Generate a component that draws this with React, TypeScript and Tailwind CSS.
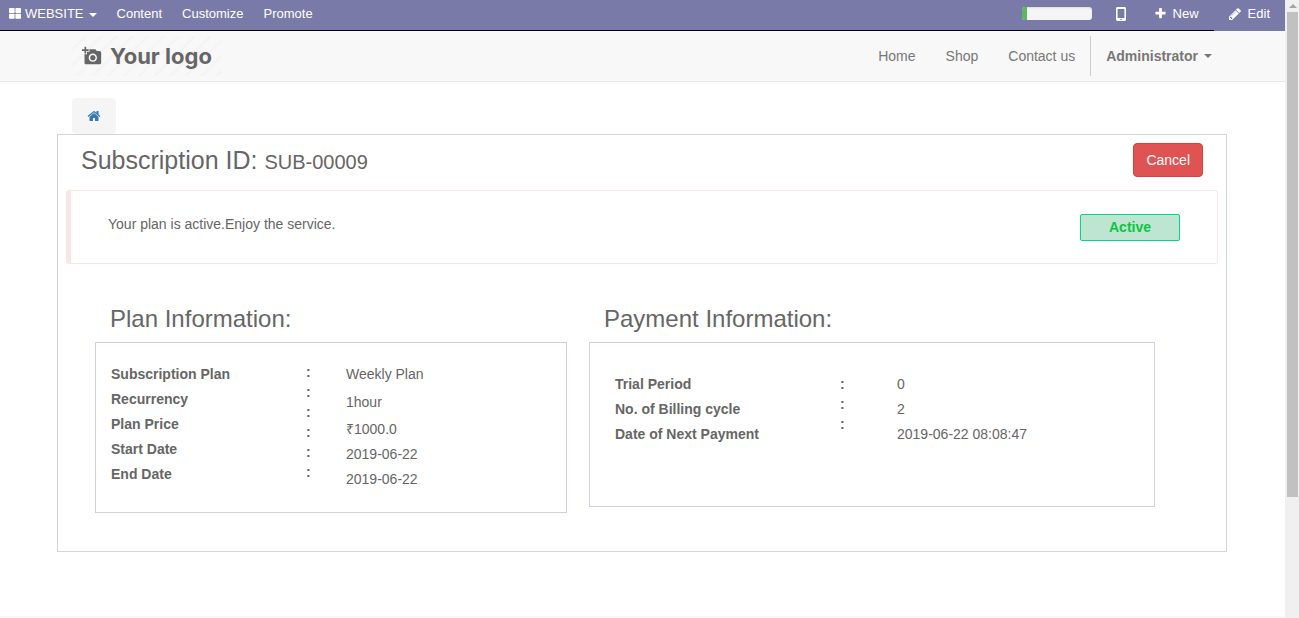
import React from "react";
import { MdAddAPhoto } from "react-icons/md";

type IconProps = { className: string };

const Caret = ({ className }: IconProps) => (
  <svg viewBox="0 0 8 4" className={className} fill="currentColor" aria-hidden="true">
    <path d="M0 0h8L4 4z" />
  </svg>
);

const TilesIcon = ({ className }: IconProps) => (
  <svg viewBox="0 0 12 11" className={className} fill="currentColor" aria-hidden="true">
    <rect x="0" y="0" width="5.6" height="5" rx="0.7" />
    <rect x="6.4" y="0" width="5.6" height="5" rx="0.7" />
    <rect x="0" y="5.8" width="5.6" height="5" rx="0.7" />
    <rect x="6.4" y="5.8" width="5.6" height="5" rx="0.7" />
  </svg>
);

const PhoneIcon = ({ className }: IconProps) => (
  <svg viewBox="0 0 10 14" className={className} fill="currentColor" aria-hidden="true">
    <path
      fillRule="evenodd"
      d="M1.4 0h7.2A1.4 1.4 0 0 1 10 1.4v11.2A1.4 1.4 0 0 1 8.6 14H1.4A1.4 1.4 0 0 1 0 12.6V1.4A1.4 1.4 0 0 1 1.4 0zM1.6 2v9h6.8V2zM5 11.7a.8.8 0 1 0 0 1.6.8.8 0 0 0 0-1.6z"
    />
  </svg>
);

const PlusIcon = ({ className }: IconProps) => (
  <svg viewBox="0 0 1792 1792" className={className} fill="currentColor" aria-hidden="true">
    <path d="M1600 736v192q0 40-28 68t-68 28h-416v416q0 40-28 68t-68 28h-192q-40 0-68-28t-28-68v-416h-416q-40 0-68-28t-28-68v-192q0-40 28-68t68-28h416v-416q0-40 28-68t68-28h192q40 0 68 28t28 68v416h416q40 0 68 28t28 68z" />
  </svg>
);

const PencilIcon = ({ className }: IconProps) => (
  <svg viewBox="0 0 1792 1792" className={className} fill="currentColor" aria-hidden="true">
    <path d="M491 1536l91-91-235-235-91 91v107h128v128h107zm523-928q0-22-22-22-10 0-17 7l-542 542q-7 7-7 17 0 22 22 22 10 0 17-7l542-542q7-7 7-17zm-54-192l416 416-832 832h-416v-416zm683 96q0 53-37 90l-166 166-416-416 166-165q36-38 90-38 53 0 91 38l235 234q37 39 37 91z" />
  </svg>
);

const HomeIcon = ({ className }: IconProps) => (
  <svg viewBox="0 0 1792 1792" className={className} fill="currentColor" aria-hidden="true">
    <path d="M1472 992v480q0 26-19 45t-45 19h-384v-384h-256v384h-384q-26 0-45-19t-19-45v-480q0-1 .5-3t.5-3l575-474 575 474q1 2 1 6zm223-69l-62 74q-8 9-21 11h-3q-13 0-21-7l-692-577-692 577q-12 8-24 7-13-2-21-11l-62-74q-8-10-7-23.5t11-21.5l719-599q32-26 76-26t76 26l244 204v-195q0-14 9-23t23-9h192q14 0 23 9t9 23v408l219 182q10 8 11 21.5t-7 23.5z" />
  </svg>
);

function TopBar() {
  return (
    <header className="flex h-[31px] bg-[#7a7aa8] text-[13px] leading-[27px] text-white">
      <div className="flex flex-1 justify-between border-b border-black">
        <nav className="flex items-start">
          <button className="flex items-center pr-[10px] pl-[9px]">
            <TilesIcon className="mr-1 h-[11px] w-3" />
            WEBSITE
            <Caret className="mt-[3px] ml-[5px] h-1 w-2" />
          </button>
          <a href="#content" className="px-[10px]">Content</a>
          <a href="#customize" className="px-[10px]">Customize</a>
          <a href="#promote" className="px-[10px]">Promote</a>
        </nav>
        <div className="flex h-[27px] items-center pr-[15px]">
          <div
            role="progressbar"
            aria-label="Setup progress"
            aria-valuenow={8}
            className="h-[13px] w-[70px] overflow-hidden rounded-[3px] bg-[#f5f5f5] shadow-[inset_0_1px_2px_rgba(0,0,0,0.1)]"
          >
            <div className="h-full w-[8%] bg-[#5cb85c]" />
          </div>
          <button aria-label="Mobile preview" className="ml-6">
            <PhoneIcon className="h-[14px] w-[10px]" />
          </button>
          <button className="ml-7 flex items-center gap-[6px]">
            <PlusIcon className="size-[13px]" />
            New
          </button>
        </div>
      </div>
      <button className="flex h-[27px] items-center gap-[6px] pr-[15px] pl-[14px]">
        <PencilIcon className="size-[14px]" />
        Edit
      </button>
    </header>
  );
}

function SiteNav() {
  return (
    <div className="border-b border-[#e7e7e7] bg-[#f8f8f8] pr-px text-[#777777]">
      <div className="mx-auto flex h-[50px] max-w-[1170px] items-center justify-between px-[15px]">
        <a
          href="#home"
          className="flex h-10 w-[150px] items-center bg-[repeating-linear-gradient(135deg,#f8f8f8_0px,#f8f8f8_8px,#f4f4f4_9px,#f4f4f4_11px)] pl-[10px] text-[#666666]"
        >
          <MdAddAPhoto className="mr-2 size-5" />
          <span className="font-['Inter'] text-[22px] leading-[40px] font-bold">Your logo</span>
        </a>
        <nav className="flex h-10 items-center text-sm leading-5">
          <a href="#home" className="px-[15px]">Home</a>
          <a href="#shop" className="px-[15px]">Shop</a>
          <a href="#contact" className="px-[15px]">Contact us</a>
          <button className="flex h-10 items-center border-l border-[#cccccc] pl-[15px] font-bold">
            Administrator
            <Caret className="ml-[6px] h-1 w-2" />
          </button>
        </nav>
      </div>
    </div>
  );
}

const planLabels = ["Subscription Plan", "Recurrency", "Plan Price", "Start Date", "End Date"];
const paymentLabels = ["Trial Period", "No. of Billing cycle", "Date of Next Payment"];
const paymentValues = ["0", "2", "2019-06-22 08:08:47"];

function Labels({ items }: { items: string[] }) {
  return (
    <ul className="leading-[25px] font-bold">
      {items.map((item) => (
        <li key={item}>{item}</li>
      ))}
    </ul>
  );
}

function Colons({ count }: { count: number }) {
  return (
    <ul className="leading-5 font-bold">
      {Array.from({ length: count }, (_, i) => (
        <li key={i}>:</li>
      ))}
    </ul>
  );
}

function PlanInformation() {
  return (
    <section>
      <h2 className="mb-[10px] pl-[15px] text-2xl leading-[26px]">Plan Information:</h2>
      <div className="grid grid-cols-[195px_40px_1fr] items-start border border-[#cfd0de] pt-[19px] pb-5 pl-[15px]">
        <Labels items={planLabels} />
        <Colons count={6} />
        <ul className="leading-[25px]">
          <li>Weekly Plan</li>
          <li className="leading-[30px]">1hour</li>
          <li>₹1000.0</li>
          <li>2019-06-22</li>
          <li>2019-06-22</li>
        </ul>
      </div>
    </section>
  );
}

function PaymentInformation() {
  return (
    <section>
      <h2 className="mb-[10px] pl-[15px] text-2xl leading-[26px]">Payment Information:</h2>
      <div className="grid grid-cols-[225px_57px_1fr] items-start border border-[#cfd0de] pt-[29px] pb-[59px] pl-[25px]">
        <Labels items={paymentLabels} />
        <div className="pt-[2px]">
          <Colons count={3} />
        </div>
        <ul className="leading-[25px]">
          {paymentValues.map((value) => (
            <li key={value}>{value}</li>
          ))}
        </ul>
      </div>
    </section>
  );
}

export default function App() {
  return (
    <div className="flex min-h-screen bg-white font-['Liberation_Sans',Arial,sans-serif] text-sm text-[#666666]">
      <div className="min-w-0 flex-1">
        <TopBar />
        <SiteNav />
        <div className="pr-px">
          <main className="mx-auto mt-4 max-w-[1170px]">
            <nav aria-label="Breadcrumb" className="flex px-[15px]">
              <a
                href="#home"
                aria-label="Home"
                className="flex h-9 items-center rounded bg-[#f5f5f5] px-[15px] text-[#337ab7]"
              >
                <HomeIcon className="size-[14px]" />
              </a>
            </nav>
            <div className="border border-[#d5d5d5] px-2 pb-[38px]">
              <div className="flex items-start justify-between px-[15px] pt-2 pb-[13px]">
                <h1 className="text-[25px] leading-[34px]">
                  Subscription ID: <span className="text-xl">SUB-00009</span>
                </h1>
                <button className="h-[34px] rounded border border-[#d9403f] bg-[#df5353] px-3 leading-5 text-white">
                  Cancel
                </button>
              </div>
              <div className="flex h-[74px] items-start justify-between rounded-[3px] border border-l-[5px] border-[#fbe4e4] px-[37px] pt-[23px]">
                <p className="leading-5">Your plan is active.Enjoy the service.</p>
                <span className="w-[100px] rounded-[2px] border border-[#00d97e] bg-[#bde5d1] text-center leading-[25px] font-bold text-[#0bc541]">
                  Active
                </span>
              </div>
              <div className="mt-[42px] grid grid-cols-[472fr_566fr] items-start gap-[22px] pr-[63px] pl-[29px]">
                <PlanInformation />
                <PaymentInformation />
              </div>
            </div>
          </main>
        </div>
        <div className="mt-16 h-[2px] bg-[#f8f8f8]" />
      </div>
      <div aria-hidden="true" className="w-[14px] bg-[#f0f0f0] pr-px pl-[2px]">
        <div className="flex h-3 items-center justify-center text-[#a3a3a3]">
          <Caret className="h-1 w-2 rotate-180" />
        </div>
        <div className="h-[485px] bg-[#c1c1c1]" />
      </div>
    </div>
  );
}
